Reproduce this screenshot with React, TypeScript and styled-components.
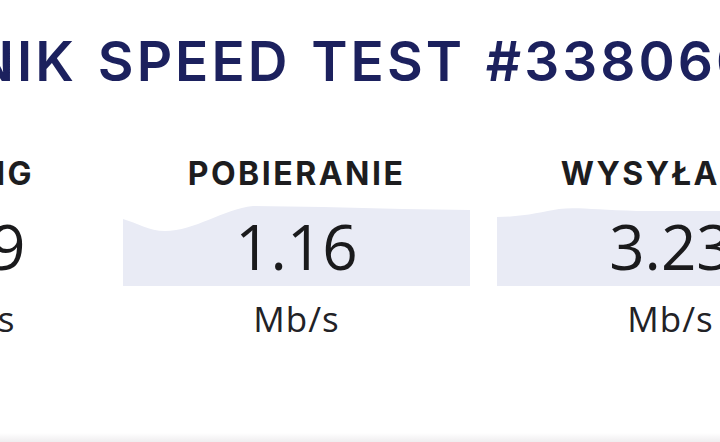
import React from "react";
import styled, { createGlobalStyle } from "styled-components";

const GlobalStyle = createGlobalStyle`
  html, body {
    margin: 0;
    padding: 0;
    background: #ffffff;
    overflow: hidden;
  }
  body {
    font-family: "Open Sans", "Liberation Sans", sans-serif;
  }
`;

interface Stat {
  id: string;
  label: string;
  value: string;
  unit: string;
  chart?: string;
}

// area shapes drawn behind the numbers (viewBox 0 0 347 80)
const downloadArea =
  "M0 13 C 14 17, 26 25, 42 25 C 72 25, 100 3, 130 0 L 200 1 L 280 3 L 347 4 L 347 80 L 0 80 Z";
const uploadArea =
  "M0 11 C 25 11, 45 6, 62 3 C 80 1, 100 4, 140 5 L 347 5 L 347 80 L 0 80 Z";

const stats: Stat[] = [
  { id: "ping", label: "PING", value: "19", unit: "ms" },
  { id: "down", label: "POBIERANIE", value: "1.16", unit: "Mb/s", chart: downloadArea },
  { id: "up", label: "WYSYŁANIE", value: "3.23", unit: "Mb/s", chart: uploadArea }
];

export default function App() {
  return (
    <>
      <GlobalStyle />
      <Page>
        <Title>WYNIK SPEED TEST #3380604</Title>
        <StatsRow>
          {stats.map(s => (
            <Column key={s.id} narrow={!s.chart}>
              <Label>{s.label}</Label>
              <ChartCell>
                {s.chart && (
                  <Area viewBox="0 0 347 80" preserveAspectRatio="none">
                    <path d={s.chart} fill="#e9ebf5" />
                  </Area>
                )}
                <Value>{s.value}</Value>
              </ChartCell>
              <Unit>{s.unit}</Unit>
            </Column>
          ))}
        </StatsRow>
        <BottomEdge />
      </Page>
    </>
  );
}

const Page = styled.div`
  height: 442px;
  display: flex;
  flex-direction: column;
  overflow: hidden;
`;

const Title = styled.h1`
  margin: 29px 0 0 -129px;
  font-family: Inter, "Open Sans", sans-serif;
  font-size: 55px;
  line-height: 64px;
  font-weight: 600;
  color: #1c215e;
  white-space: nowrap;
  letter-spacing: 3px;
  word-spacing: 4px;
`;

const StatsRow = styled.div`
  display: flex;
  gap: 27px;
  margin: 61px 0 0 -116px;
`;

const Column = styled.div<{ narrow: boolean }>`
  flex: 0 0 ${({ narrow }) => (narrow ? "212px" : "347px")};
  display: flex;
  flex-direction: column;
  align-items: center;
`;

const Label = styled.div`
  font-family: Inter, "Open Sans", sans-serif;
  font-size: 32px;
  line-height: 40px;
  font-weight: 700;
  color: #1d1d1f;
  letter-spacing: 2.5px;
  white-space: nowrap;
`;

const ChartCell = styled.div`
  margin-top: 12px;
  width: 100%;
  height: 80px;
  display: grid;
  place-items: center;
`;

const Area = styled.svg`
  grid-area: 1 / 1;
  width: 100%;
  height: 100%;
  display: block;
`;

const Value = styled.div`
  grid-area: 1 / 1;
  font-size: 62px;
  line-height: 70px;
  font-weight: 400;
  color: #1a1a1c;
  z-index: 1;
`;

const Unit = styled.div`
  margin-top: 13px;
  font-size: 35px;
  line-height: 40px;
  color: #222226;
  letter-spacing: 1px;
`;

const BottomEdge = styled.div`
  margin-top: auto;
  height: 9px;
  background: linear-gradient(#ffffff, #efedef);
`;
